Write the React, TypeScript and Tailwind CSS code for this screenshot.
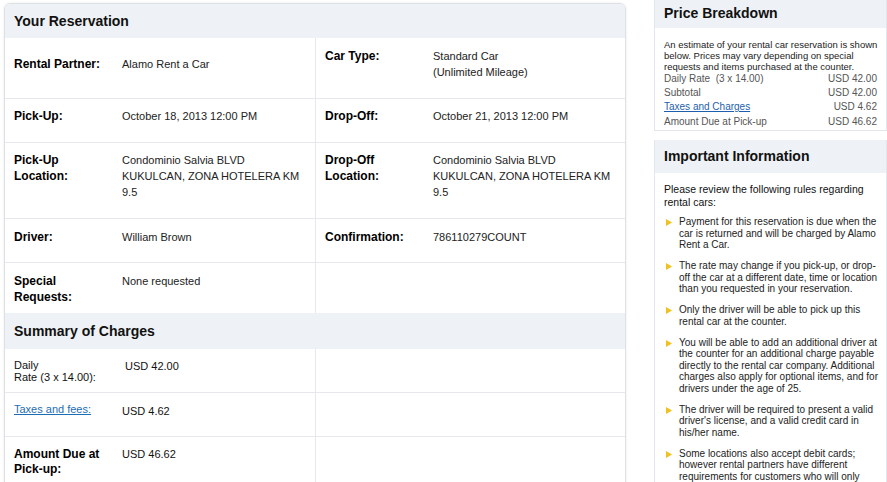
import type { ReactNode } from 'react'

type Cell = {
  label: string[]
  value: string[]
  pt: number
}

type Row = {
  h: string
  left: Cell
  right?: Cell
}

const rows: Row[] = [
  {
    h: 'h-[61px]',
    left: { label: ['Rental Partner:'], value: ['Alamo Rent a Car'], pt: 18 },
    right: { label: ['Car Type:'], value: ['Standard Car', '(Unlimited Mileage)'], pt: 10 },
  },
  {
    h: 'h-[44px]',
    left: { label: ['Pick-Up:'], value: ['October 18, 2013 12:00 PM'], pt: 9 },
    right: { label: ['Drop-Off:'], value: ['October 21, 2013 12:00 PM'], pt: 9 },
  },
  {
    h: 'h-[76px]',
    left: {
      label: ['Pick-Up', 'Location:'],
      value: ['Condominio Salvia BLVD', 'KUKULCAN, ZONA HOTELERA KM', '9.5'],
      pt: 9,
    },
    right: {
      label: ['Drop-Off', 'Location:'],
      value: ['Condominio Salvia BLVD', 'KUKULCAN, ZONA HOTELERA KM', '9.5'],
      pt: 9,
    },
  },
  {
    h: 'h-[44px]',
    left: { label: ['Driver:'], value: ['William Brown'], pt: 10 },
    right: { label: ['Confirmation:'], value: ['786110279COUNT'], pt: 10 },
  },
  {
    h: 'h-[50px]',
    left: { label: ['Special', 'Requests:'], value: ['None requested'], pt: 10 },
  },
]

const rules: string[][] = [
  ['Payment for this reservation is due when the', 'car is returned and will be charged by Alamo', 'Rent a Car.'],
  ['The rate may change if you pick-up, or drop-', 'off the car at a different date, time or location', 'than you requested in your reservation.'],
  ['Only the driver will be able to pick up this', 'rental car at the counter.'],
  [
    'You will be able to add an additional driver at',
    'the counter for an additional charge payable',
    'directly to the rental car company. Additional',
    'charges also apply for optional items, and for',
    'drivers under the age of 25.',
  ],
  ['The driver will be required to present a valid', "driver's license, and a valid credit card in", 'his/her name.'],
  [
    'Some locations also accept debit cards;',
    'however rental partners have different',
    'requirements for customers who will only',
    'be using debit cards at the time of pick-up.',
  ],
]

function Lines({ lines }: { lines: string[] }) {
  return (
    <>
      {lines.map((l, i) => (
        <span key={i} className="block whitespace-nowrap">
          {l}
        </span>
      ))}
    </>
  )
}

function InfoCell({ cell, border }: { cell?: Cell; border?: boolean }) {
  return (
    <div
      className={`flex pl-[9px] ${border ? 'border-r border-[#e6e8eb]' : ''}`}
      style={{ paddingTop: cell?.pt ?? 0 }}
    >
      {cell && (
        <>
          <div className="w-[108px] shrink-0 text-[12px] font-bold leading-[16px] text-black">
            <Lines lines={cell.label} />
          </div>
          <div className="text-[11px] leading-[16px] text-[#222]">
            <Lines lines={cell.value} />
          </div>
        </>
      )}
    </div>
  )
}

function SectionHeader({ children, className = '' }: { children: ReactNode; className?: string }) {
  return (
    <div className={`flex items-center bg-[#eef1f5] px-[9px] text-[14px] font-bold text-[#111] ${className}`}>
      {children}
    </div>
  )
}

export default function App() {
  return (
    <div className="flex h-[482px] w-[887px] overflow-hidden bg-white font-['Liberation_Sans',Arial,sans-serif]">
      {/* Main card */}
      <div className="ml-[4px] mt-[3px] h-[600px] w-[622px] shrink-0 rounded-t-[6px] border border-[#dde1e6] shadow-[0_0_3px_rgba(0,0,0,0.08)]">
        <SectionHeader className="h-[34px] rounded-t-[5px]">Your Reservation</SectionHeader>

        {rows.map((row, i) => (
          <div
            key={i}
            className={`grid grid-cols-[311px_1fr] ${row.h} ${i < rows.length - 1 ? 'border-b border-[#e6e8eb]' : ''}`}
          >
            <InfoCell cell={row.left} border />
            <InfoCell cell={row.right} />
          </div>
        ))}

        <SectionHeader className="h-[36px]">Summary of Charges</SectionHeader>

        <div className="grid h-[44px] grid-cols-[311px_1fr] border-b border-[#e6e8eb]">
          <div className="flex border-r border-[#e6e8eb] pl-[9px] pt-[10px] text-[11px] text-[#111]">
            <div className="w-[111px] shrink-0 leading-[12px]">
              <span className="block">Daily</span>
              <span className="block whitespace-nowrap">Rate (3 x 14.00):</span>
            </div>
            <div className="leading-[14px]">USD 42.00</div>
          </div>
          <div />
        </div>

        <div className="grid h-[44px] grid-cols-[311px_1fr] border-b border-[#e6e8eb]">
          <div className="flex border-r border-[#e6e8eb] pl-[9px] pt-[9px] text-[11px]">
            <a href="#" className="w-[108px] shrink-0 leading-[14px] text-[#1d6db5] underline">
              Taxes and fees:
            </a>
            <div className="pt-[2px] leading-[14px] text-[#111]">USD 4.62</div>
          </div>
          <div />
        </div>

        <div className="grid h-[60px] grid-cols-[311px_1fr]">
          <div className="flex border-r border-[#e6e8eb] pl-[9px] pt-[10px]">
            <div className="w-[108px] shrink-0 text-[12px] font-bold leading-[15px] text-black">
              <span className="block">Amount Due at</span>
              <span className="block">Pick-up:</span>
            </div>
            <div className="text-[11px] leading-[15px] text-[#111]">USD 46.62</div>
          </div>
          <div />
        </div>
      </div>

      {/* Sidebar */}
      <div className="ml-[28px] w-[233px] shrink-0">
        <div className="border-x border-b border-[#e3e6ea]">
          <SectionHeader className="h-[28px] pb-[2px]">Price Breakdown</SectionHeader>
          <div className="pb-[2px] pl-[9px] pr-[9px] pt-[11px]">
            <p className="text-[9.5px] leading-[11px] text-[#222]">
              <Lines
                lines={[
                  'An estimate of your rental car reservation is shown',
                  'below. Prices may vary depending on special',
                  'requests and items purchased at the counter.',
                ]}
              />
            </p>
            <div className="mt-[-1px] text-[10px] text-[#555]">
              <div className="flex h-[14px] items-center justify-between">
                <span className="whitespace-pre">Daily Rate  (3 x 14.00)</span>
                <span>USD 42.00</span>
              </div>
              <div className="flex h-[14px] items-center justify-between">
                <span>Subtotal</span>
                <span>USD 42.00</span>
              </div>
              <div className="flex h-[15px] items-center justify-between">
                <a href="#" className="text-[#1d5fae] underline">
                  Taxes and Charges
                </a>
                <span>USD 4.62</span>
              </div>
              <div className="flex h-[14px] items-center justify-between">
                <span>Amount Due at Pick-up</span>
                <span>USD 46.62</span>
              </div>
            </div>
          </div>
        </div>

        <div className="mt-[9px] border-x border-[#e3e6ea]">
          <SectionHeader className="h-[33px]">Important Information</SectionHeader>
          <div className="pl-[9px] pr-[6px] pt-[10px]">
            <p className="mb-[8px] text-[10.5px] leading-[12.5px] text-[#111]">
              <Lines lines={['Please review the following rules regarding', 'rental cars:']} />
            </p>
            <ul>
              {rules.map((lines, i) => (
                <li key={i} className="mb-[9.5px] flex text-[10px] leading-[11.5px] text-[#222]">
                  <svg width="15" height="11" viewBox="0 0 15 11" className="mt-[1px] shrink-0">
                    <path d="M2 2 L8 5.5 L2 9 Z" fill="#f1c21b" />
                  </svg>
                  <div>
                    <Lines lines={lines} />
                  </div>
                </li>
              ))}
            </ul>
          </div>
        </div>
      </div>
    </div>
  )
}
